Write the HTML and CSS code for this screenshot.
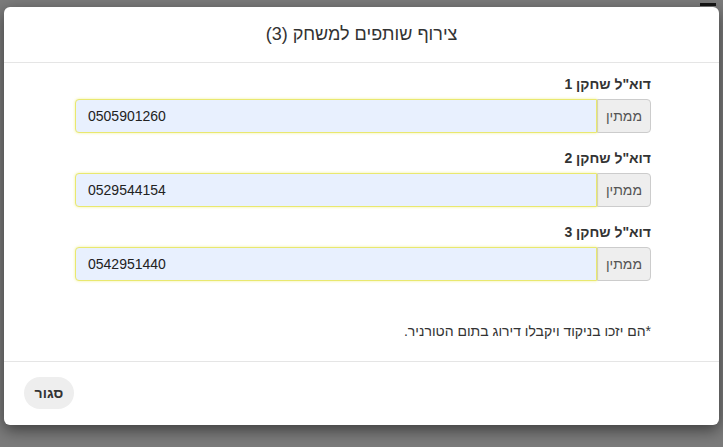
FILE: index.html
```html
<!DOCTYPE html>
<html lang="he" dir="rtl">

<head>
  <meta charset="UTF-8">
  <meta name="viewport" content="width=device-width, initial-scale=1.0">
  <title>צירוף שותפים למשחק</title>
  <link rel="stylesheet" href="styles.css">
</head>

<body>
  <div class="backdrop">
    <span class="menu_icon"></span>
    <div class="modal">
      <div class="modal_header">
        <h4>צירוף שותפים למשחק (3)</h4>
      </div>
      <div class="modal_body">
        <div class="form_group">
          <label>דוא"ל שחקן 1</label>
          <div class="input_group">
            <span class="addon">ממתין</span>
            <input type="text" value="0505901260">
          </div>
        </div>
        <div class="form_group">
          <label>דוא"ל שחקן 2</label>
          <div class="input_group">
            <span class="addon">ממתין</span>
            <input type="text" value="0529544154">
          </div>
        </div>
        <div class="form_group">
          <label>דוא"ל שחקן 3</label>
          <div class="input_group">
            <span class="addon">ממתין</span>
            <input type="text" value="0542951440">
          </div>
        </div>
        <p class="note">*הם יזכו בניקוד ויקבלו דירוג בתום הטורניר.</p>
      </div>
      <div class="modal_footer">
        <button class="btn_close">סגור</button>
      </div>
    </div>
  </div>
</body>

</html>
```

FILE: styles.css
```css
* {
  margin: 0;
  padding: 0;
  box-sizing: border-box;
}

body {
  font-family: "Liberation Sans", Arial, "DejaVu Sans", sans-serif;
  font-size: 14px;
  line-height: 20px;
  color: #333;
  background: #7b7b7b;
}

.backdrop {
  position: relative;
  min-height: 100vh;
  padding: 7px 4px 0;
  background: #7b7b7b;
}

.menu_icon {
  position: absolute;
  top: 3px;
  right: 7px;
  width: 16px;
  height: 3px;
  background: #151515;
}

.modal {
  position: relative;
  background: #fff;
  border-radius: 6px;
  box-shadow: 0 5px 15px rgba(0, 0, 0, .5);
}

.modal_header {
  height: 56px;
  border-bottom: 1px solid #e5e5e5;
  display: flex;
  align-items: center;
  justify-content: center;
}

.modal_header h4 {
  font-size: 18px;
  font-weight: normal;
  line-height: 24px;
  color: #333;
  padding-bottom: 2px;
}

.modal_body {
  padding: 11px 68px 20px 71px;
}

.form_group {
  margin-bottom: 15px;
}

.form_group label {
  display: block;
  font-weight: bold;
  margin-bottom: 5px;
}

.input_group {
  display: flex;
  height: 34px;
}

.addon {
  width: 54px;
  display: flex;
  align-items: center;
  justify-content: center;
  background: #eee;
  color: #555;
  border: 1px solid #ccc;
  border-radius: 0 4px 4px 0;
}

.input_group input {
  flex: 1;
  direction: ltr;
  text-align: left;
  font-family: inherit;
  font-size: 14px;
  color: #222;
  padding: 0 12px;
  background: #e8f0fe;
  border: 1px solid #e9e86f;
  border-radius: 4px 0 0 4px;
  box-shadow: 0 0 3px rgba(235, 235, 110, .7);
  outline: none;
}

.note {
  margin-top: 40px;
}

.modal_footer {
  border-top: 1px solid #e5e5e5;
  padding: 15px 20px 16px;
  display: flex;
  justify-content: flex-end;
}

.btn_close {
  width: 50px;
  height: 32px;
  border: none;
  border-radius: 16px;
  background: #eee;
  font-family: inherit;
  font-size: 14px;
  font-weight: bold;
  color: #333;
}
```
